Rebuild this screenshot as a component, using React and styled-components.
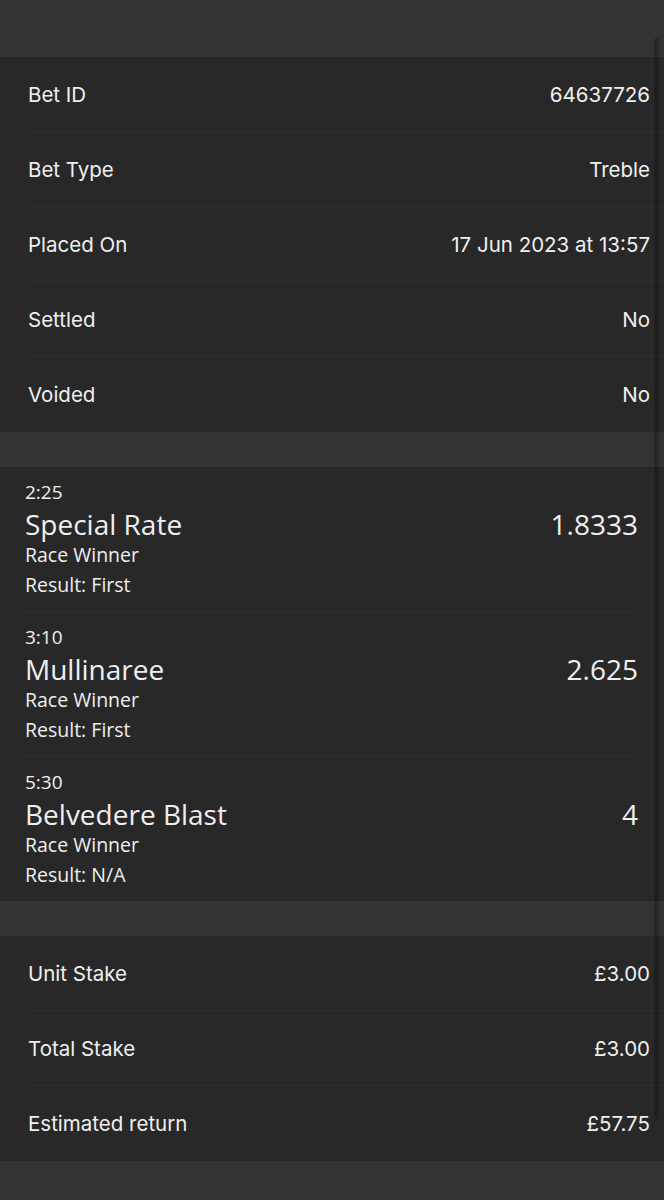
import React from 'react'
import styled, { createGlobalStyle } from 'styled-components'

const GlobalStyle = createGlobalStyle`
  html, body {
    margin: 0;
    padding: 0;
    background: #333333;
  }
  * { box-sizing: border-box; }
`

const Screen = styled.div`
  position: relative;
  width: 664px;
  height: 1200px;
  overflow: hidden;
  background: #333333;
  padding-top: 57px;
  font-family: Inter, "Liberation Sans", sans-serif;
  color: #efefef;
`

const ScrollThumb = styled.div`
  position: absolute;
  top: 38px;
  right: 5px;
  width: 5px;
  height: 1082px;
  border-radius: 3px;
  background: rgba(0, 0, 0, 0.22);
`

const Card = styled.section`
  background: #282828;
  margin-bottom: 35px;
`

const InfoRow = styled.div`
  display: flex;
  align-items: center;
  justify-content: space-between;
  height: 75px;
  margin-left: 28px;
  padding-right: 14px;
  border-bottom: 1px solid #2f2f2f;
  font-size: 20.5px;
  &:last-child { border-bottom: none; }
`

const Selection = styled.div`
  display: grid;
  grid-template-columns: 1fr auto;
  margin-left: 25px;
  margin-right: 26px;
  padding: 12px 0 14px;
  border-bottom: 1px solid #2f2f2f;
  font-family: "Open Sans", Roboto, sans-serif;
  &:last-child { border-bottom: none; }
`

const Time = styled.div`
  grid-column: 1 / 3;
  font-size: 19px;
  line-height: 26px;
`

const Runner = styled.div`
  font-size: 28px;
  line-height: 38px;
`

const Odds = styled.div`
  font-size: 28px;
  line-height: 38px;
  text-align: right;
`

const Market = styled.div`
  grid-column: 1 / 3;
  font-size: 19.5px;
  line-height: 24px;
  margin-top: ${p => (p.$gap ? '6px' : '0')};
`

const details = [
  ['Bet ID', '64637726'],
  ['Bet Type', 'Treble'],
  ['Placed On', '17 Jun 2023 at 13:57'],
  ['Settled', 'No'],
  ['Voided', 'No'],
]

const legs = [
  { time: '2:25', runner: 'Special Rate', odds: '1.8333', result: 'First' },
  { time: '3:10', runner: 'Mullinaree', odds: '2.625', result: 'First' },
  { time: '5:30', runner: 'Belvedere Blast', odds: '4', result: 'N/A' },
]

const stakes = [
  ['Unit Stake', '£3.00'],
  ['Total Stake', '£3.00'],
  ['Estimated return', '£57.75'],
]

export default function App() {
  return (
    <>
      <GlobalStyle />
      <Screen>
        <Card>
          {details.map(([k, v]) => (
            <InfoRow key={k}>
              <span>{k}</span>
              <span>{v}</span>
            </InfoRow>
          ))}
        </Card>

        <Card>
          {legs.map(leg => (
            <Selection key={leg.time}>
              <Time>{leg.time}</Time>
              <Runner>{leg.runner}</Runner>
              <Odds>{leg.odds}</Odds>
              <Market>Race Winner</Market>
              <Market $gap>Result: {leg.result}</Market>
            </Selection>
          ))}
        </Card>

        <Card>
          {stakes.map(([k, v]) => (
            <InfoRow key={k}>
              <span>{k}</span>
              <span>{v}</span>
            </InfoRow>
          ))}
        </Card>
        <ScrollThumb />
      </Screen>
    </>
  )
}
